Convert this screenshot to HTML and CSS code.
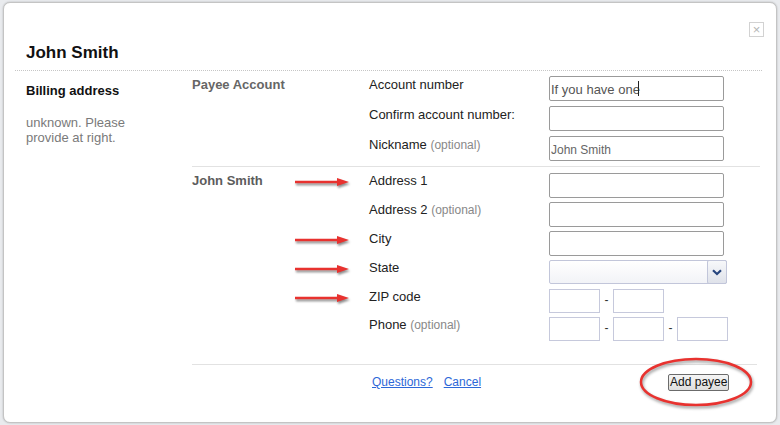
FILE: index.html
```html
<!DOCTYPE html>
<html>
<head>
<meta charset="utf-8">
<link rel="stylesheet" href="styles.css">
</head>
<body>
<div class="modal">
  <button class="close" type="button">&times;</button>
  <h1 class="title">John Smith</h1>
  <div class="body">
    <aside class="side">
      <div class="side-title">Billing address</div>
      <p class="side-text">unknown. Please provide at right.</p>
    </aside>
    <div class="main">
      <section class="group first">
        <div class="group-label">Payee Account</div>
        <div class="arrow-cell"></div>
        <label class="lbl">Account number</label>
        <div class="field"><input class="txt" type="text" value="If you have one"><span class="caret"></span></div>

        <div class="group-label"></div>
        <div class="arrow-cell"></div>
        <label class="lbl">Confirm account number:</label>
        <div class="field"><input class="txt" type="text"></div>

        <div class="group-label"></div>
        <div class="arrow-cell"></div>
        <label class="lbl">Nickname <span class="opt">(optional)</span></label>
        <div class="field"><input class="txt small-text" type="text" value="John Smith"></div>
      </section>

      <section class="group second">
        <div class="group-label">John Smith</div>
        <div class="arrow-cell"><svg class="arrow" width="54" height="10" viewBox="0 0 54 10"><line x1="0" y1="5" x2="44" y2="5"/><polygon points="42,1 54,5 42,9"/></svg></div>
        <label class="lbl">Address 1</label>
        <div class="field"><input class="txt" type="text"></div>

        <div class="group-label"></div>
        <div class="arrow-cell"></div>
        <label class="lbl">Address 2 <span class="opt">(optional)</span></label>
        <div class="field"><input class="txt" type="text"></div>

        <div class="group-label"></div>
        <div class="arrow-cell"><svg class="arrow" width="54" height="10" viewBox="0 0 54 10"><line x1="0" y1="5" x2="44" y2="5"/><polygon points="42,1 54,5 42,9"/></svg></div>
        <label class="lbl">City</label>
        <div class="field"><input class="txt" type="text"></div>

        <div class="group-label"></div>
        <div class="arrow-cell"><svg class="arrow" width="54" height="10" viewBox="0 0 54 10"><line x1="0" y1="5" x2="44" y2="5"/><polygon points="42,1 54,5 42,9"/></svg></div>
        <label class="lbl">State</label>
        <div class="field">
          <div class="select"><span class="select-btn"><svg width="10" height="7" viewBox="0 0 10 7"><path d="M1 1.2 L5 5 L9 1.2" fill="none" stroke="#27457e" stroke-width="2.2"/></svg></span></div>
        </div>

        <div class="group-label"></div>
        <div class="arrow-cell"><svg class="arrow" width="54" height="10" viewBox="0 0 54 10"><line x1="0" y1="5" x2="44" y2="5"/><polygon points="42,1 54,5 42,9"/></svg></div>
        <label class="lbl">ZIP code</label>
        <div class="field split"><span class="box"></span><span class="dash">-</span><span class="box"></span></div>

        <div class="group-label"></div>
        <div class="arrow-cell"></div>
        <label class="lbl">Phone <span class="opt">(optional)</span></label>
        <div class="field split"><span class="box"></span><span class="dash">-</span><span class="box"></span><span class="dash">-</span><span class="box"></span></div>
      </section>

      <div class="footer">
        <div class="links"><a href="#">Questions?</a><a href="#">Cancel</a></div>
        <div class="action">
          <button class="add" type="button">Add payee</button>
          <svg class="ring" width="118" height="54" viewBox="0 0 118 54"><ellipse cx="58" cy="26" rx="55" ry="23"/></svg>
        </div>
      </div>
    </div>
  </div>
</div>
</body>
</html>
```

FILE: styles.css
```css
* { box-sizing: border-box; }
html, body { margin: 0; padding: 0; }
body {
  width: 780px;
  height: 425px;
  overflow: hidden;
  background: #e9ebee;
  font-family: "Liberation Sans", Arial, sans-serif;
  color: #222;
  padding: 2px 3px 2px 3px;
}
.modal {
  position: relative;
  width: 774px;
  height: 421px;
  background: #fff;
  border: 1px solid #c4c4c4;
  border-radius: 7px;
  box-shadow: 0 0 2px rgba(0,0,0,0.25);
}
.close {
  position: absolute;
  top: 19px;
  left: 745px;
  width: 15px;
  height: 15px;
  padding: 0;
  border: 1px solid #d2d2d2;
  background: #fff;
  color: #b5b5b5;
  font: 13px/12px "Liberation Sans", Arial, sans-serif;
}
.title {
  margin: 0 14px 0 11px;
  padding: 40px 0 0 11px;
  font-size: 17px;
  line-height: 20px;
  font-weight: bold;
  color: #111;
  height: 68px;
  border-bottom: 1px dotted #c6c6c6;
}
.body {
  display: flex;
}
.side {
  width: 188px;
  padding: 12px 0 0 22px;
}
.side-title {
  font-size: 13px;
  line-height: 16px;
  font-weight: bold;
  color: #111;
}
.side-text {
  margin: 16px 0 0;
  font-size: 13px;
  line-height: 15px;
  color: #7a7a7a;
  width: 110px;
}
.main {
  width: 568px;
  padding-top: 5px;
}
.group {
  display: grid;
  grid-template-columns: 103px 74px 180px 1fr;
  align-items: start;
}
.group.first {
  row-gap: 5px;
  padding-bottom: 5px;
  border-bottom: 1px solid #e2e2e2;
}
.group.second {
  row-gap: 4px;
  padding-top: 6px;
  padding-bottom: 23px;
  border-bottom: 1px solid #e2e2e2;
  margin-right: 3px;
}
.group-label {
  padding-top: 1px;
  font-size: 13px;
  line-height: 16px;
  font-weight: bold;
  color: #666;
}
.group.second .group-label { color: #5c5c5c; padding-top: 0; }
.arrow-cell { padding-top: 4px; }
.arrow line { stroke: #e8322f; stroke-width: 2.6; }
.arrow polygon { fill: #e8322f; }
.arrow { display: block; filter: drop-shadow(1px 2px 1.2px rgba(0,0,0,0.45)); overflow: visible; }
.lbl {
  padding-top: 1px;
  font-size: 13px;
  line-height: 16px;
  color: #222;
}
.group.second .lbl { padding-top: 0; }
.opt {
  font-size: 12px;
  color: #888;
}
.field {
  position: relative;
  height: 25px;
}
.txt {
  display: block;
  width: 175px;
  height: 25px;
  margin: 0;
  border: 1px solid #9a9a9a;
  border-radius: 2px;
  padding: 2px 2px 0 1px;
  font: 13px "Liberation Sans", Arial, sans-serif;
  color: #555;
  background: #fff;
  outline: none;
}
.small-text { font-size: 12px; color: #666; }
.caret {
  position: absolute;
  left: 89px;
  top: 5px;
  width: 1px;
  height: 15px;
  background: #222;
}
.select {
  position: relative;
  width: 178px;
  height: 24px;
  border: 1px solid #c2c6da;
  border-radius: 2px;
  background: linear-gradient(#ffffff, #f2f3f7);
}
.select-btn {
  position: absolute;
  right: -1px;
  top: -1px;
  width: 20px;
  height: 24px;
  border: 1px solid #c2c6da;
  border-radius: 2px;
  background: linear-gradient(#f7f8fa, #dfe2ea);
  display: flex;
  align-items: center;
  justify-content: center;
}
.field.split {
  display: flex;
  align-items: flex-start;
  height: 24px;
}
.box {
  width: 51px;
  height: 24px;
  border: 1px solid #c6c9dc;
  background: #fff;
}
.dash {
  width: 13px;
  text-align: center;
  font-size: 12px;
  line-height: 22px;
  color: #333;
}
.footer {
  display: flex;
  align-items: flex-start;
  padding: 9px 0 0 180px;
}
.links {
  display: flex;
  gap: 11px;
  padding-top: 1px;
}
.links a {
  font-size: 12px;
  line-height: 15px;
  color: #2d68d8;
  text-decoration: underline;
}
.action {
  position: relative;
  margin-left: 187px;
}
.add {
  display: block;
  height: 17px;
  padding: 0 1px;
  font: 12px/15px "Liberation Sans", Arial, sans-serif;
  color: #111;
  border: 1px solid #6b6b6b;
  border-radius: 2px;
  background: linear-gradient(#f5f5f5, #dedede);
}
.ring {
  position: absolute;
  left: -30px;
  top: -18px;
  overflow: visible;
  filter: drop-shadow(1px 2px 1.5px rgba(0,0,0,0.4));
}
.ring ellipse {
  fill: none;
  stroke: #e8322f;
  stroke-width: 2.5;
}
```
